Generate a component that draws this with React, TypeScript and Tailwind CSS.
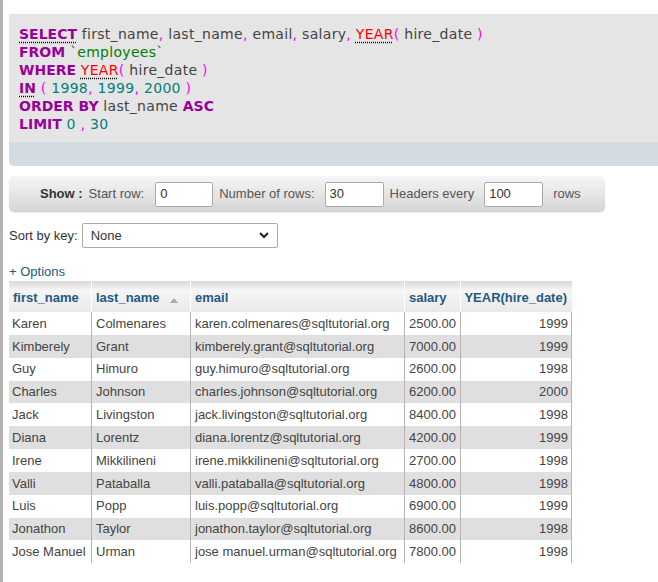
const rows: [string, string, string, string, string][] = [
  ["Karen", "Colmenares", "karen.colmenares@sqltutorial.org", "2500.00", "1999"],
  ["Kimberely", "Grant", "kimberely.grant@sqltutorial.org", "7000.00", "1999"],
  ["Guy", "Himuro", "guy.himuro@sqltutorial.org", "2600.00", "1998"],
  ["Charles", "Johnson", "charles.johnson@sqltutorial.org", "6200.00", "2000"],
  ["Jack", "Livingston", "jack.livingston@sqltutorial.org", "8400.00", "1998"],
  ["Diana", "Lorentz", "diana.lorentz@sqltutorial.org", "4200.00", "1999"],
  ["Irene", "Mikkilineni", "irene.mikkilineni@sqltutorial.org", "2700.00", "1998"],
  ["Valli", "Pataballa", "valli.pataballa@sqltutorial.org", "4800.00", "1998"],
  ["Luis", "Popp", "luis.popp@sqltutorial.org", "6900.00", "1999"],
  ["Jonathon", "Taylor", "jonathon.taylor@sqltutorial.org", "8600.00", "1998"],
  ["Jose Manuel", "Urman", "jose manuel.urman@sqltutorial.org", "7800.00", "1998"],
];

const cols = ["w-[82px]", "w-[99px]", "w-[214px]", "w-[56px]", "w-[111px]"];

function Kw({ children, abbr }: { children: string; abbr?: boolean }) {
  return (
    <span
      className={`font-bold text-[#990099] tracking-normal ${abbr ? "underline decoration-dotted decoration-black underline-offset-[3px]" : ""}`}
    >
      {children}
    </span>
  );
}

function Fn({ children }: { children: string }) {
  return (
    <span className="text-[#ff0000] underline decoration-dotted decoration-black underline-offset-[3px]">
      {children}
    </span>
  );
}

const P = ({ c }: { c: string }) => <span className="text-[#ff00ff]">{c}</span>;
const N = ({ c }: { c: string }) => <span className="text-[#008080]">{c}</span>;

function SqlBox() {
  return (
    <div className="bg-[#e5e5e5] rounded-bl-[5px] overflow-hidden">
      <div className="px-[10px] pt-[11px] pb-[9px] font-['DejaVu_Sans',sans-serif] text-[14px] leading-[18px] tracking-[0.3px] text-[#444] whitespace-pre">
        <div>
          <Kw abbr>SELECT</Kw> first_name<P c="," /> last_name<P c="," /> email<P c="," /> salary<P c="," />{" "}
          <Fn>YEAR</Fn>
          <P c="(" /> hire_date <P c=")" />
        </div>
        <div>
          <Kw>FROM</Kw> `<span className="text-[#008000]">employees</span>`
        </div>
        <div>
          <Kw>WHERE</Kw> <Fn>YEAR</Fn>
          <P c="(" /> hire_date <P c=")" />
        </div>
        <div>
          <Kw abbr>IN</Kw> <P c="(" /> <N c="1998" />
          <P c="," /> <N c="1999" />
          <P c="," /> <N c="2000" /> <P c=")" />
        </div>
        <div>
          <Kw>ORDER BY</Kw> last_name <Kw>ASC</Kw>
        </div>
        <div>
          <Kw>LIMIT</Kw> <N c="0" /> <P c="," /> <N c="30" />
        </div>
      </div>
      <div className="h-[24px] bg-[#d3dce3]" />
    </div>
  );
}

function Field({ value, w }: { value: string; w: string }) {
  return (
    <div
      className={`${w} h-[25px] bg-white border border-[#aaa] rounded-[2px] px-[4px] flex items-center text-[#333]`}
    >
      {value}
    </div>
  );
}

function ShowBar() {
  return (
    <div className="mt-[10px] w-[596px] h-[36px] rounded-[5px] bg-gradient-to-b from-[#f6f6f6] to-[#d5d5d5] flex items-center pl-[31px] text-[13px] text-[#555] shadow-[0_1px_1px_rgba(0,0,0,0.08)]">
      <span className="font-bold text-[#333] mr-[6px]">Show :</span>
      <span className="mr-[11px]">Start row:</span>
      <Field value="0" w="w-[58px]" />
      <span className="ml-[6px] mr-[10px]">Number of rows:</span>
      <Field value="30" w="w-[59px]" />
      <span className="ml-[6px] mr-[10px]">Headers every</span>
      <Field value="100" w="w-[59px]" />
      <span className="ml-[10px]">rows</span>
    </div>
  );
}

function SortBy() {
  return (
    <div className="mt-[11px] flex items-center text-[13px] text-[#333]">
      <span className="mr-[4px]">Sort by key:</span>
      <div className="w-[196px] h-[25px] bg-white border border-[#aaa] rounded-[2px] flex items-center justify-between pl-[8px] pr-[8px]">
        <span>None</span>
        <svg width="10" height="7" viewBox="0 0 10 7">
          <polyline points="1,1 5,5 9,1" fill="none" stroke="#222" strokeWidth="2" />
        </svg>
      </div>
    </div>
  );
}

function ResultTable() {
  const heads = ["first_name", "last_name", "email", "salary", "YEAR(hire_date)"];
  return (
    <div className="w-[563px]">
      <div className="flex h-[31px] bg-gradient-to-b from-[#d8d8d8] via-[#f6f6f6] via-[30%] to-[#e9e9e9]">
        {heads.map((h, i) => (
          <div
            key={h}
            className={`${cols[i]} ${i > 0 ? "border-l border-white" : ""} flex items-end pb-[5px] px-[4px] font-bold text-[#235a81] ${i === 4 ? "justify-end" : ""}`}
          >
            <span>{h}</span>
            {i === 1 && (
              <svg className="ml-[10px] mb-[4px]" width="8" height="5" viewBox="0 0 8 5">
                <polygon points="0,5 4,0 8,5" fill="#aaa" />
              </svg>
            )}
          </div>
        ))}
      </div>
      {rows.map((r, ri) => (
        <div
          key={r[0]}
          className={`flex h-[22.85px] border-r border-[#b5b5b5] ${ri % 2 === 1 ? "bg-[#dfdfdf]" : "bg-white"}`}
        >
          {r.map((c, i) => (
            <div
              key={i}
              className={`${cols[i]} ${i > 0 ? "border-l border-[#b5b5b5]" : ""} flex items-center px-[3px] whitespace-nowrap overflow-hidden ${i === 4 ? "justify-end" : ""} ${i === 0 ? "pl-[3px]" : "pl-[4px]"}`}
            >
              {c}
            </div>
          ))}
        </div>
      ))}
    </div>
  );
}

export default function App() {
  return (
    <div className="flex min-h-[582px] w-[658px] bg-white font-['Liberation_Sans',Arial,sans-serif] text-[13px] text-[#444] overflow-hidden">
      <div className="w-[3px] shrink-0 bg-[#b3b3b3]" />
      <div className="flex-1 pl-[6px] pt-[14px] min-w-0">
        <SqlBox />
        <ShowBar />
        <SortBy />
        <div className="mt-[15px] text-[#235a81] leading-[18px]">+ Options</div>
        <ResultTable />
      </div>
    </div>
  );
}
